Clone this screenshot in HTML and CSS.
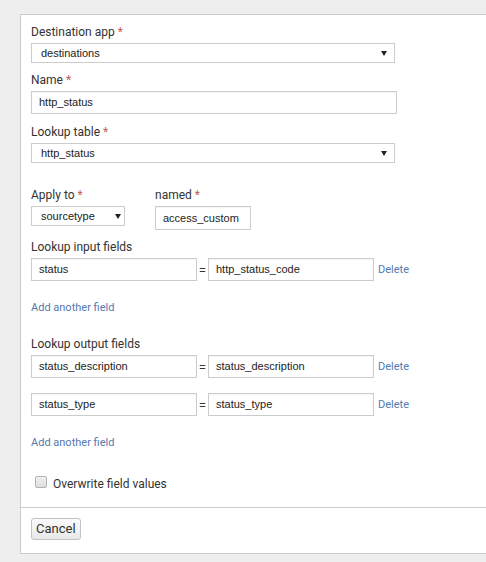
FILE: index.html
```html
<!DOCTYPE html>
<html>
<head>
<meta charset="utf-8">
<link rel="stylesheet" href="styles.css">
</head>
<body>
<div class="page">
  <div class="card">
    <div class="card-body">
      <div class="label">Destination app <span class="req">*</span></div>
      <div class="select select-wide"><span>destinations</span><i class="caret"></i></div>

      <div class="label mt9">Name <span class="req">*</span></div>
      <div class="input input-name">http_status</div>

      <div class="label mt10">Lookup table <span class="req">*</span></div>
      <div class="select select-wide"><span>http_status</span><i class="caret"></i></div>

      <div class="apply-row">
        <div class="apply-col">
          <div class="label">Apply to <span class="req">*</span></div>
          <div class="select select-small"><span>sourcetype</span><i class="caret"></i></div>
        </div>
        <div class="named-col">
          <div class="label">named <span class="req">*</span></div>
          <div class="input input-named">access_custom</div>
        </div>
      </div>

      <div class="label mt9">Lookup input fields</div>
      <div class="pair-row">
        <div class="input input-pair">status</div>
        <span class="eq">=</span>
        <div class="input input-pair">http_status_code</div>
        <a class="link delete">Delete</a>
      </div>
      <a class="link add">Add another field</a>

      <div class="label mt20">Lookup output fields</div>
      <div class="pair-row">
        <div class="input input-pair">status_description</div>
        <span class="eq">=</span>
        <div class="input input-pair">status_description</div>
        <a class="link delete">Delete</a>
      </div>
      <div class="pair-row mt15">
        <div class="input input-pair">status_type</div>
        <span class="eq">=</span>
        <div class="input input-pair">status_type</div>
        <a class="link delete">Delete</a>
      </div>
      <a class="link add">Add another field</a>

      <div class="check-row">
        <span class="checkbox"></span>
        <span class="check-label">Overwrite field values</span>
      </div>
    </div>
    <div class="card-footer">
      <button class="btn">Cancel</button>
    </div>
  </div>
</div>
</body>
</html>
```

FILE: styles.css
```css
html, body {
  margin: 0;
  padding: 0;
  overflow: hidden;
}
body {
  background: #eeeeee;
  font-family: Roboto, "Liberation Sans", sans-serif;
  color: #333;
}
.page {
  padding: 14px 0 0 20px;
  height: 548px;
}
.card {
  background: #fff;
  border: 1px solid #cccccc;
  border-right: none;
}
.card-body {
  padding: 9px 10px 15px 10px;
  display: flex;
  flex-direction: column;
  align-items: flex-start;
}
.label {
  font-size: 12px;
  line-height: 16px;
  color: #333;
  margin-bottom: 3px;
}
.req {
  color: #c4605a;
}
.mt9 { margin-top: 9px; }
.mt10 { margin-top: 10px; }
.mt15 { margin-top: 15px; }
.mt20 { margin-top: 20px; }

.select {
  box-sizing: border-box;
  height: 20px;
  border: 1px solid #cccccc;
  background: #fff;
  font-family: "Liberation Sans", Arial, sans-serif;
  font-size: 11px;
  line-height: 18px;
  color: #222;
  padding: 0 7px 0 9px;
  display: flex;
  align-items: center;
  justify-content: space-between;
}
.select-wide { width: 364px; }
.select-small { width: 94px; padding-right: 3px; }
.caret {
  width: 0;
  height: 0;
  border-left: 3px solid transparent;
  border-right: 3px solid transparent;
  border-top: 5px solid #222;
  margin-top: 1px;
}

.input {
  box-sizing: border-box;
  height: 23px;
  border: 1px solid #cccccc;
  background: #fff;
  box-shadow: inset 0 1px 1px rgba(0,0,0,0.04);
  font-family: "Liberation Sans", Arial, sans-serif;
  font-size: 11px;
  line-height: 21px;
  color: #222;
  padding: 0 7px;
  white-space: nowrap;
}
.input-name { width: 366px; }
.input-named { width: 96px; height: 24px; line-height: 22px; }
.input-pair { width: 166px; }

.apply-row {
  margin-top: 24px;
  display: flex;
  gap: 30px;
  align-items: flex-start;
}
.apply-col, .named-col {
  display: flex;
  flex-direction: column;
  align-items: flex-start;
}

.pair-row {
  display: flex;
  align-items: center;
}
.eq {
  width: 11px;
  text-align: center;
  font-family: "Liberation Sans", Arial, sans-serif;
  font-size: 11px;
  color: #333;
}
.link {
  color: #5379af;
  font-size: 11px;
  line-height: 16px;
  cursor: pointer;
}
.delete {
  margin-left: 4px;
}
.add {
  margin-top: 19px;
}

.check-row {
  margin-top: 25px;
  margin-left: 4px;
  display: flex;
  align-items: flex-start;
  gap: 6px;
}
.checkbox {
  box-sizing: border-box;
  width: 12px;
  height: 12px;
  border: 1px solid #b3b3b3;
  border-radius: 2px;
  background: linear-gradient(#f0f0f0, #dedede);
}
.check-label {
  font-size: 12px;
  line-height: 16px;
  color: #333;
}

.card-footer {
  border-top: 1px solid #cccccc;
  padding: 10px 10px 13px 10px;
}
.btn {
  box-sizing: border-box;
  height: 22px;
  padding: 0 4px;
  border: 1px solid #c3c3c3;
  border-radius: 3px;
  background: linear-gradient(#fbfbfb, #e9e9e9);
  font-family: Roboto, "Liberation Sans", sans-serif;
  font-size: 13px;
  line-height: 20px;
  color: #333;
  display: block;
}
```
